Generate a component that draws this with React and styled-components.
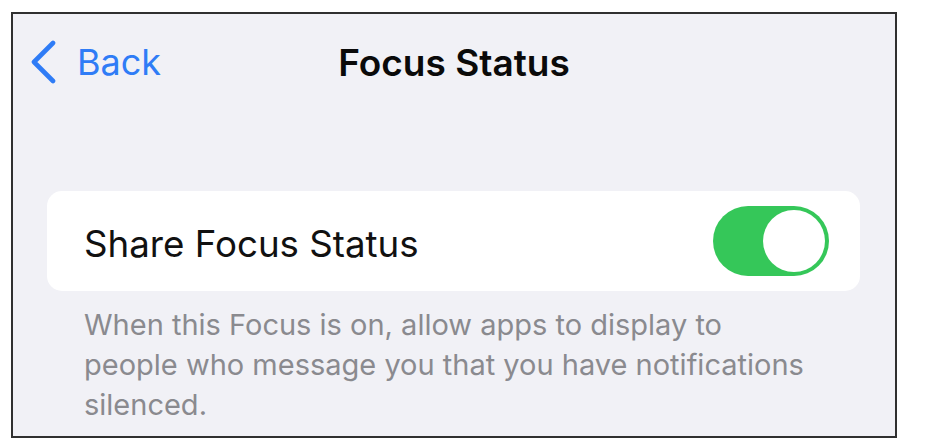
import React from "react";
import styled, { createGlobalStyle } from "styled-components";

const GlobalStyle = createGlobalStyle`
    html, body {
        margin: 0;
        padding: 0;
        background: #ffffff;
    }

    body {
        font-family: Inter, "Noto Sans", "Liberation Sans", sans-serif;
        -webkit-font-smoothing: antialiased;
    }
`;

const App = () => {
    return (
        <>
            <GlobalStyle />
            <Frame>
                <NavBar>
                    <BackButton type="button">
                        <svg width="28" height="44" viewBox="0 0 28 44" aria-hidden="true">
                            <path
                                d="M23 3 L4 22 L23 41"
                                fill="none"
                                stroke="currentColor"
                                strokeWidth="4.6"
                                strokeLinecap="round"
                                strokeLinejoin="round"
                            />
                        </svg>
                        <span>Back</span>
                    </BackButton>
                    <Title>Focus Status</Title>
                    <div />
                </NavBar>

                <Card>
                    <Label>Share Focus Status</Label>
                    <Toggle $on aria-checked="true" role="switch">
                        <Knob $on />
                    </Toggle>
                </Card>

                <Footnote>
                    When this Focus is on, allow apps to display to people who message you that you have
                    notifications silenced.
                </Footnote>
            </Frame>
        </>
    );
};

const Frame = styled.div`
    margin: 12px 0 0 11px;
    width: 886px;
    height: 426px;
    box-sizing: border-box;
    border: 2px solid #303030;
    background: #f1f1f6;
    overflow: hidden;
`;

const NavBar = styled.header`
    height: 96px;
    display: grid;
    grid-template-columns: 1fr auto 1fr;
    align-items: center;
    padding: 0 17px;
`;

const BackButton = styled.button`
    display: flex;
    align-items: center;
    gap: 19px;
    justify-self: start;
    padding: 0;
    border: none;
    background: none;
    color: #2f7cf6;
    font-family: inherit;
    font-size: 36px;
    font-weight: 400;
    cursor: pointer;

    svg {
        display: block;
    }
`;

const Title = styled.h1`
    margin: 0;
    font-size: 37px;
    font-weight: 600;
    color: #0a0a0a;
`;

const Card = styled.section`
    margin: 81px 35px 0 34px;
    height: 100px;
    box-sizing: border-box;
    padding: 0 31px 0 37px;
    display: flex;
    align-items: center;
    justify-content: space-between;
    background: #ffffff;
    border-radius: 15px;
`;

const Label = styled.span`
    font-size: 36.7px;
    color: #111111;
    padding-top: 4px;
`;

const Toggle = styled.div`
    position: relative;
    width: 116px;
    height: 70px;
    border-radius: 35px;
    background: ${(p) => (p.$on ? "#35c759" : "#e5e5ea")};
`;

const Knob = styled.span`
    position: absolute;
    top: 4px;
    left: ${(p) => (p.$on ? "50px" : "4px")};
    width: 62px;
    height: 62px;
    border-radius: 50%;
    background: #ffffff;
`;

const Footnote = styled.p`
    margin: 14px 0 0 71px;
    max-width: 724px;
    font-size: 29px;
    line-height: 40px;
    color: #8a8a8f;
`;

export default App;
